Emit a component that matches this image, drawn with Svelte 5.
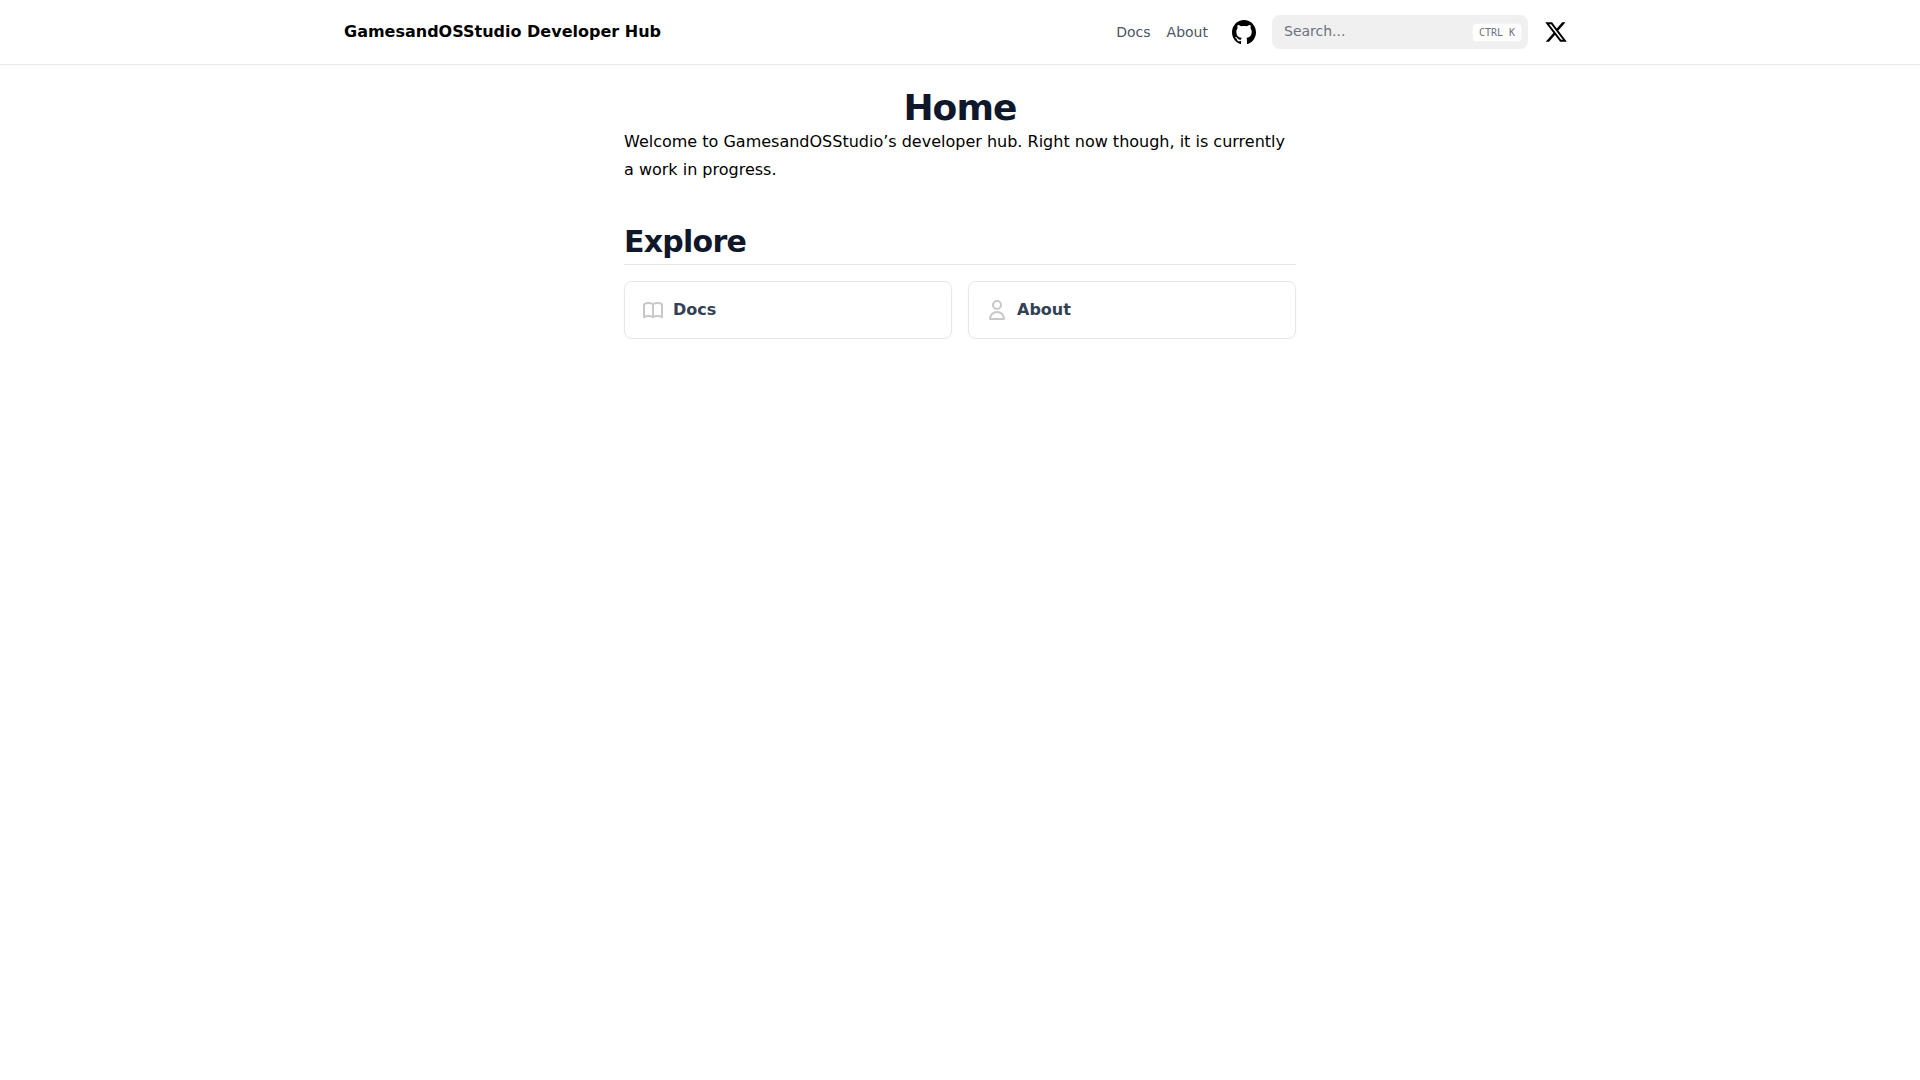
<script lang="ts">
	const links = ['Docs', 'About'];
</script>

<header class="navbar">
	<nav>
		<a class="logo" href="#home">GamesandOSStudio Developer Hub</a>
		<div class="spacer"></div>
		{#each links as link}
			<a class="nav-link" href="#link">{link}</a>
		{/each}
		<a class="icon-link github" href="#github" aria-label="GitHub">
			<svg width="24" height="24" viewBox="3 3 18 18" fill="currentColor">
				<path d="M12 3C7.0275 3 3 7.12937 3 12.2276C3 16.3109 5.57625 19.7597 9.15374 20.9824C9.60374 21.0631 9.77249 20.7863 9.77249 20.5441C9.77249 20.3249 9.76125 19.5982 9.76125 18.8254C7.5 19.2522 6.915 18.2602 6.735 17.7412C6.63375 17.4759 6.19499 16.6569 5.8125 16.4378C5.4975 16.2647 5.0475 15.838 5.80124 15.8264C6.51 15.8149 7.01625 16.4954 7.18499 16.7723C7.99499 18.1679 9.28875 17.7758 9.80625 17.5335C9.885 16.9337 10.1212 16.53 10.38 16.2993C8.3775 16.0687 6.285 15.2728 6.285 11.7432C6.285 10.7397 6.63375 9.9092 7.20749 9.26326C7.1175 9.03257 6.8025 8.08674 7.2975 6.81794C7.2975 6.81794 8.05125 6.57571 9.77249 7.76377C10.4925 7.55615 11.2575 7.45234 12.0225 7.45234C12.7875 7.45234 13.5525 7.55615 14.2725 7.76377C15.9937 6.56418 16.7475 6.81794 16.7475 6.81794C17.2424 8.08674 16.9275 9.03257 16.8375 9.26326C17.4113 9.9092 17.76 10.7281 17.76 11.7432C17.76 15.2843 15.6563 16.0687 13.6537 16.2993C13.98 16.5877 14.2613 17.1414 14.2613 18.0065C14.2613 19.2407 14.25 20.2326 14.25 20.5441C14.25 20.7863 14.4188 21.0746 14.8688 20.9824C16.6554 20.3639 18.2079 19.1866 19.3078 17.6162C20.4077 16.0457 20.9995 14.1611 21 12.2276C21 7.12937 16.9725 3 12 3Z" />
			</svg>
		</a>
		<div class="search">
			<input type="search" placeholder="Search..." />
			<kbd>CTRL K</kbd>
		</div>
		<a class="icon-link x" href="#x" aria-label="X">
			<svg width="24" height="24" viewBox="0 0 24 24" fill="currentColor">
				<path d="M18.244 2.25h3.308l-7.227 8.26 8.502 11.24H16.17l-5.214-6.817L4.99 21.75H1.68l7.73-8.835L1.254 2.25H8.08l4.713 6.231zm-1.161 17.52h1.833L7.084 4.126H5.117z" />
			</svg>
		</a>
	</nav>
</header>

<main>
	<h1>Home</h1>
	<p>Welcome to GamesandOSStudio’s developer hub. Right now though, it is currently a work in progress.</p>
	<h2>Explore</h2>
	<div class="cards">
		<a class="card" href="#docs">
			<svg width="24" height="24" viewBox="0 0 24 24" fill="none" stroke="currentColor" stroke-width="2" stroke-linecap="round" stroke-linejoin="round">
				<path d="M12 6.253v13m0-13C10.832 5.477 9.246 5 7.5 5S4.168 5.477 3 6.253v13C4.168 18.477 5.754 18 7.5 18s3.332.477 4.5 1.253m0-13C13.168 5.477 14.754 5 16.5 5c1.747 0 3.332.477 4.5 1.253v13C19.832 18.477 18.247 18 16.5 18c-1.746 0-3.332.477-4.5 1.253" />
			</svg>
			<span>Docs</span>
		</a>
		<a class="card" href="#about">
			<svg width="24" height="24" viewBox="0 0 24 24" fill="none" stroke="currentColor" stroke-width="2" stroke-linecap="round" stroke-linejoin="round">
				<path d="M16 7a4 4 0 11-8 0 4 4 0 018 0zM12 14a7 7 0 00-7 7h14a7 7 0 00-7-7z" />
			</svg>
			<span>About</span>
		</a>
	</div>
</main>

<style>
	:global(body) {
		font-family: 'DejaVu Sans', sans-serif;
		background: #fff;
		color: #000;
	}

	a {
		text-decoration: none;
		color: inherit;
	}

	.navbar {
		border-bottom: 1px solid #e5e7eb;
		box-shadow: 0 2px 4px rgba(0, 0, 0, 0.02);
	}

	nav {
		box-sizing: border-box;
		max-width: 1280px;
		height: 64px;
		margin: 0 auto;
		padding: 0 24px;
		display: flex;
		align-items: center;
		justify-content: flex-end;
		gap: 16px;
	}

	.logo {
		font-size: 16px;
		line-height: 24px;
		font-weight: 700;
	}

	.spacer {
		flex: 1;
	}

	.nav-link {
		font-size: 14px;
		color: #4b5563;
	}

	.icon-link {
		display: flex;
		padding: 8px;
		color: #000;
		margin-left: -8px;
	}

	.github {
		margin: 0 -8px 0 0;
	}

	.search {
		position: relative;
		width: 256px;
		height: 34px;
	}

	input {
		box-sizing: border-box;
		width: 100%;
		height: 100%;
		border: 0;
		border-radius: 8px;
		background: #f0f0f0;
		padding: 0 12px 2px;
		font: 14px 'DejaVu Sans', sans-serif;
		color: #111827;
		outline: none;
		appearance: none;
	}

	input::placeholder {
		color: #6b7280;
	}

	kbd {
		position: absolute;
		right: 6px;
		top: 8px;
		height: 19px;
		box-sizing: border-box;
		padding: 0 6px;
		display: flex;
		align-items: center;
		background: #fff;
		border: 1px solid #f3f4f6;
		border-radius: 4px;
		font: 10px / 1 'DejaVu Sans Mono', monospace;
		color: #6b7280;
		white-space: pre;
	}

	main {
		width: 672px;
		margin: 0 auto;
		padding-top: 23px;
	}

	h1 {
		margin: 0;
		text-align: center;
		font-size: 36px;
		line-height: 40px;
		font-weight: 700;
		letter-spacing: -0.025em;
		color: #0f172a;
	}

	p {
		margin: 0;
		font-size: 16px;
		line-height: 28px;
	}

	h2 {
		margin: 40px 0 0;
		padding-bottom: 4px;
		border-bottom: 1px solid #e5e7eb;
		font-size: 30px;
		line-height: 36px;
		font-weight: 700;
		letter-spacing: -0.025em;
		color: #0f172a;
	}

	.cards {
		margin-top: 16px;
		display: grid;
		grid-template-columns: 1fr 1fr;
		gap: 16px;
	}

	.card {
		box-sizing: border-box;
		height: 58px;
		padding: 0 16px;
		display: flex;
		align-items: center;
		gap: 8px;
		border: 1px solid #e5e7eb;
		border-radius: 8px;
		box-shadow: 0 1px 2px rgba(0, 0, 0, 0.05);
		color: #c8c8c8;
	}

	.card svg {
		flex: none;
	}

	.card span {
		font-size: 16px;
		line-height: 24px;
		font-weight: 600;
		color: #334155;
	}
</style>
